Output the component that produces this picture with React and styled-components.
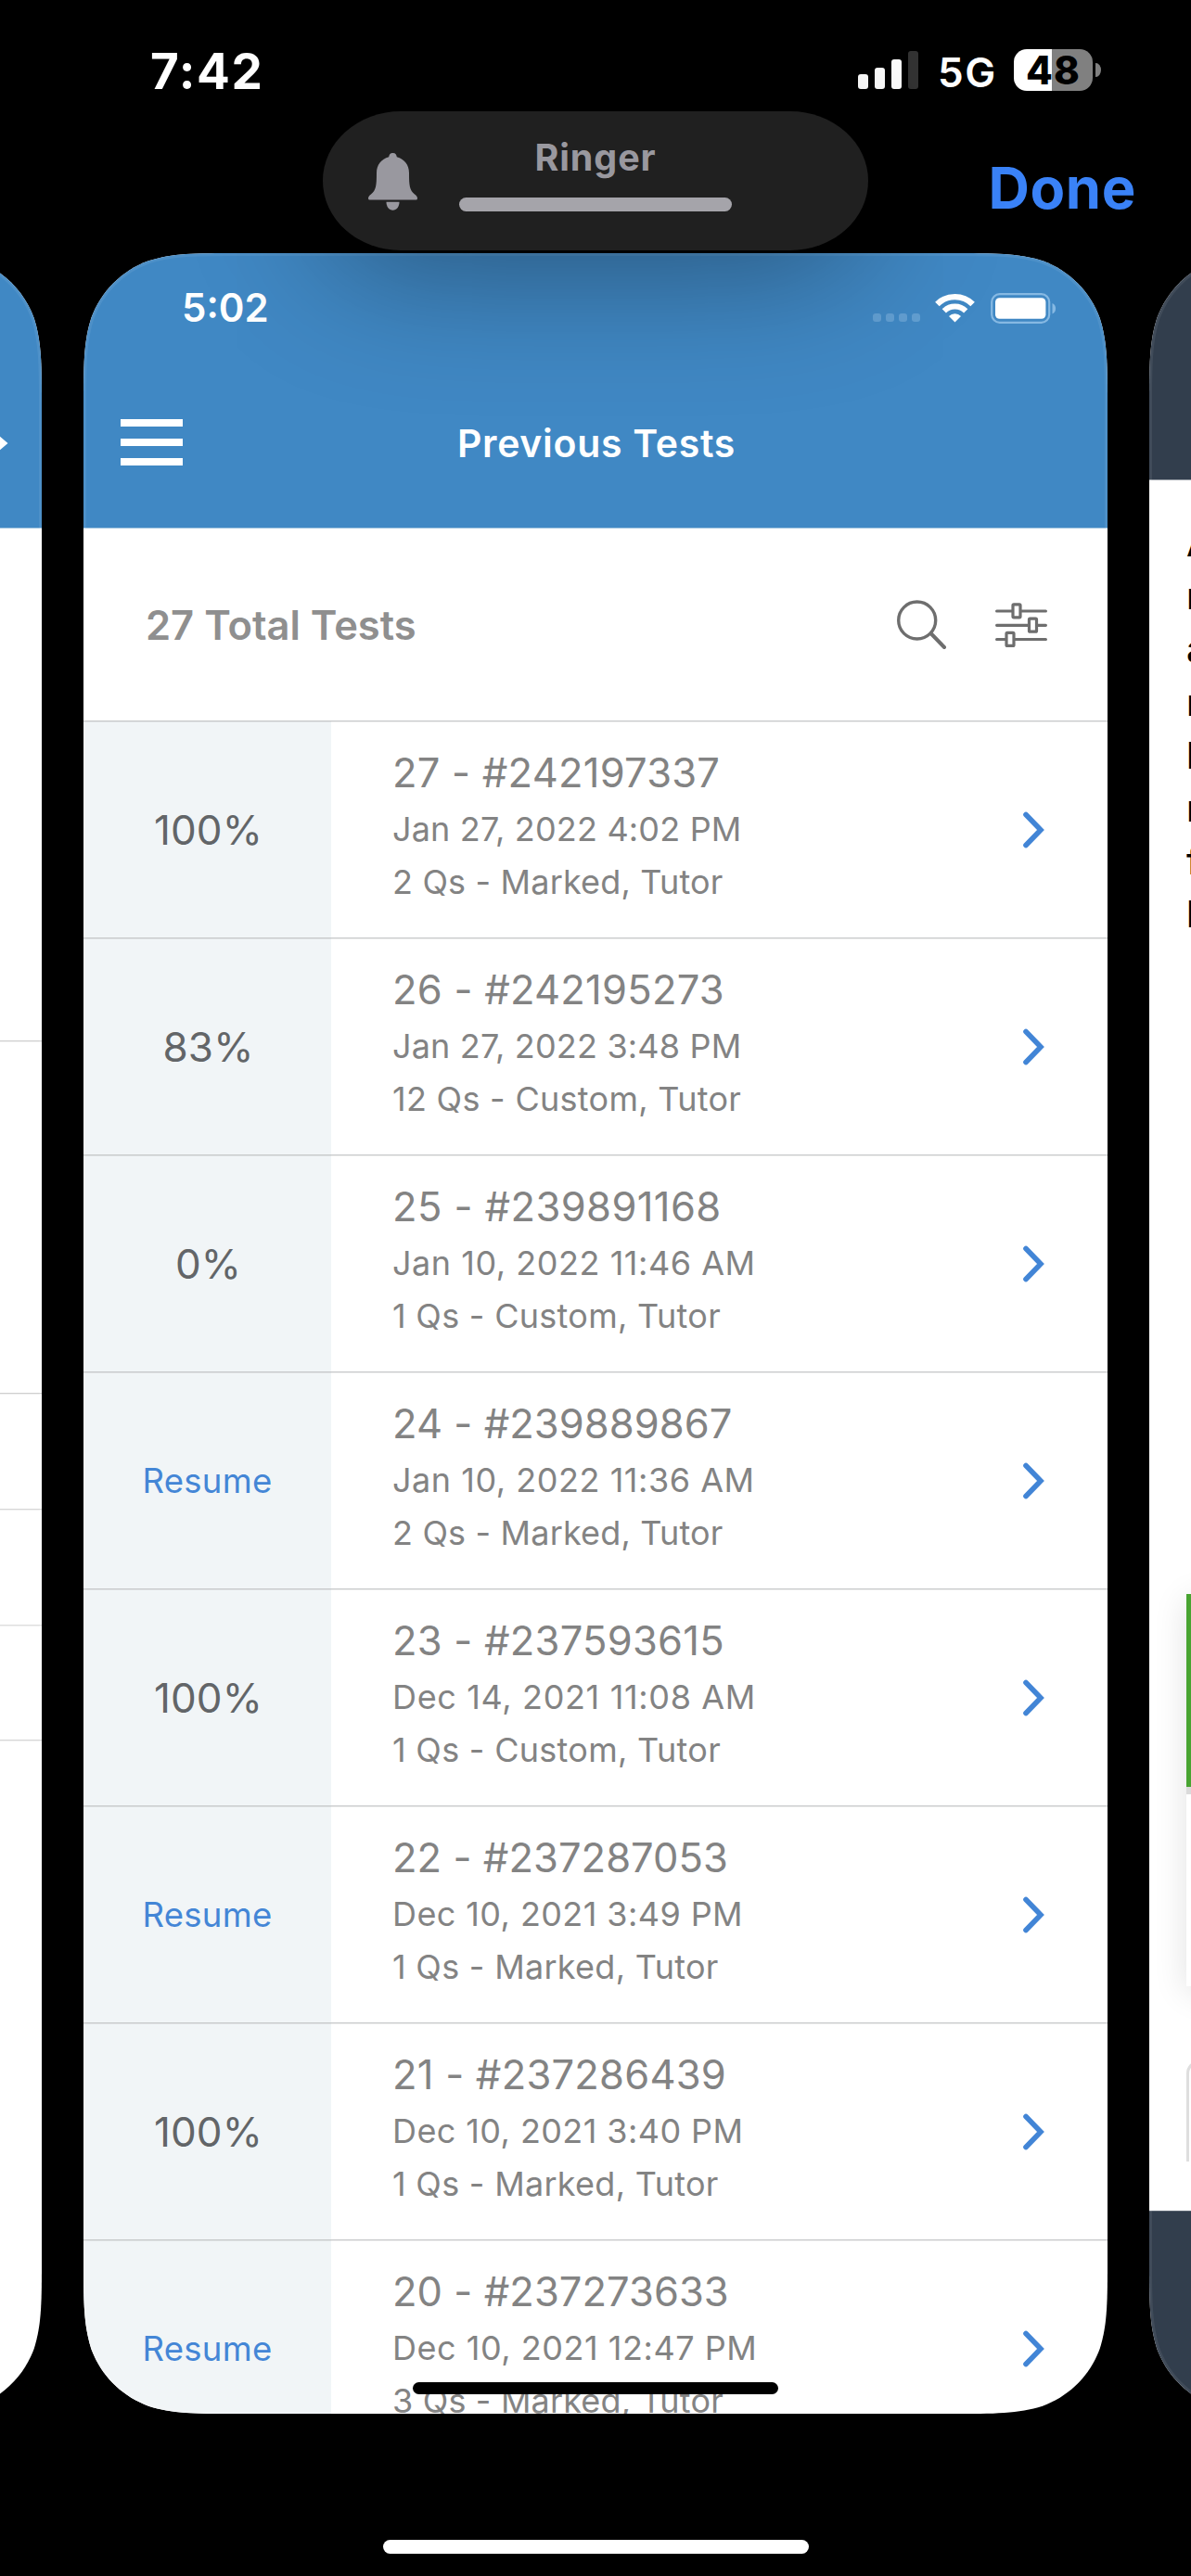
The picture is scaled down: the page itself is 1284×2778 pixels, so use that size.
import React from "react";
import styled, { createGlobalStyle } from "styled-components";

const GlobalStyle = createGlobalStyle`
  *, *::before, *::after { box-sizing: border-box; }
  html, body { margin: 0; padding: 0; background: #000; }
  body { font-family: Inter, "Liberation Sans", sans-serif; overflow: hidden; }
`;

/* Outline of an app card with continuous-curvature corners */
const CARD_W = 1104;
const CARD_H = 2330;
const cardOutline = (() => {
  const w = CARD_W;
  const h = CARD_H;
  const r = 111;
  const a = 1.52866 * r;
  const b = 1.08849 * r;
  const c = 0.86841 * r;
  const d = 0.63149 * r;
  const e = 0.07491 * r;
  const f = 0.37282 * r;
  const g = 0.16906 * r;
  const n = (...v) => v.map((x) => x.toFixed(2)).join(" ");
  return [
    `M${n(a, 0)} L${n(w - a, 0)}`,
    `C${n(w - b, 0, w - c, 0, w - d, e)} C${n(w - f, g, w - g, f, w - e, d)} C${n(w, c, w, b, w, a)}`,
    `L${n(w, h - a)}`,
    `C${n(w, h - b, w, h - c, w - e, h - d)} C${n(w - g, h - f, w - f, h - g, w - d, h - e)} C${n(w - c, h, w - b, h, w - a, h)}`,
    `L${n(a, h)}`,
    `C${n(b, h, c, h, d, h - e)} C${n(f, h - g, g, h - f, e, h - d)} C${n(0, h - c, 0, h - b, 0, h - a)}`,
    `L${n(0, a)}`,
    `C${n(0, b, 0, c, e, d)} C${n(g, f, f, g, d, e)} C${n(c, 0, b, 0, a, 0)} Z`,
  ].join(" ");
})();

const Screen = styled.div`
  position: relative;
  display: flex;
  flex-direction: column;
  align-items: center;
  width: 1284px;
  height: 2778px;
  overflow: hidden;
  background: #000;
`;

/* ---------- system chrome ---------- */

const SystemBar = styled.header`
  display: flex;
  align-items: center;
  justify-content: space-between;
  width: 100%;
  height: 154px;
  padding: 0 97px 0 162px;
  color: #fff;
`;

const SystemClock = styled.span`
  font-size: 53px;
  font-weight: 700;
  line-height: 60px;
  letter-spacing: 1.6px;
`;

const SystemIcons = styled.div`
  display: flex;
  align-items: center;
`;

const Bars = styled.div`
  display: flex;
  align-items: flex-end;
  gap: 7px;
  height: 42px;
  margin: -4px 21px 0 0;
`;

const Bar = styled.i`
  width: 11px;
  height: ${(p) => p.$h}px;
  border-radius: 3px;
  background: ${(p) => (p.$off ? "#333" : "#fff")};
`;

const Network = styled.span`
  width: 82px;
  font-size: 44px;
  font-weight: 600;
  line-height: 48px;
  letter-spacing: 1.5px;
  padding-top: 2px;
`;

const Battery = styled.div`
  display: flex;
  align-items: center;
  gap: 3px;
  margin-top: -3px;
`;

const BatteryBody = styled.div`
  display: flex;
  align-items: center;
  justify-content: center;
  width: 85px;
  height: 45px;
  border-radius: 14px;
  background: linear-gradient(90deg, #fff 41px, #808080 41px);
  color: #000;
  font-size: 42px;
  font-weight: 800;
  line-height: 45px;
  letter-spacing: 1px;
`;

const BatteryNub = styled.i`
  width: 6px;
  height: 15px;
  border-radius: 0 6px 6px 0 / 0 8px 8px 0;
  background: #808080;
`;

const SwitcherBar = styled.div`
  display: flex;
  justify-content: flex-end;
  width: 100%;
  height: 119px;
  padding: 13px 59px 0 0;
`;

const DoneButton = styled.button`
  height: 72px;
  padding: 0;
  border: 0;
  background: none;
  color: #3a82f7;
  font-family: inherit;
  font-size: 61.5px;
  font-weight: 700;
  line-height: 72px;
  letter-spacing: 0.6px;
`;

const RingerHud = styled.div`
  position: absolute;
  z-index: 2;
  top: 120px;
  left: 348px;
  display: flex;
  width: 588px;
  height: 150px;
  padding: 0 147px 0 49px;
  border-radius: 84px / 75px;
  background: #202020;
  box-shadow: 0 14px 150px rgba(0, 0, 0, 0.42);
`;

const RingerBody = styled.div`
  display: flex;
  flex: 1;
  flex-direction: column;
  align-items: center;
  padding-top: 26px;
`;

const RingerLabel = styled.span`
  color: #99989f;
  font-size: 39.5px;
  font-weight: 700;
  line-height: 48px;
  letter-spacing: 0.9px;
`;

const RingerTrack = styled.div`
  width: 294px;
  height: 15px;
  margin-top: 19px;
  border-radius: 8px;
  background: #a5a4aa;
`;

const BellIcon = styled.svg`
  width: 53px;
  height: 62px;
  margin: 45px 45px 0 0;
  fill: #99989f;
`;

const Carousel = styled.main`
  display: flex;
  flex: none;
  justify-content: center;
  gap: 45px;
  width: 1284px;
  height: ${CARD_H}px;
`;

const Card = styled.section`
  position: relative;
  display: flex;
  flex: none;
  flex-direction: column;
  width: ${CARD_W}px;
  height: ${CARD_H}px;
  overflow: hidden;
  background: #fff;
  clip-path: path("${cardOutline}");
`;

const Rim = styled.svg`
  position: absolute;
  inset: 0;
  fill: none;
  stroke: rgba(255, 255, 255, 0.07);
  stroke-width: 6;
  pointer-events: none;
`;

const HomeIndicator = styled.div`
  width: 459px;
  height: 15px;
  margin-top: 136px;
  border-radius: 8px;
  background: #fff;
`;

/* ---------- current card ---------- */

const AppHeader = styled.header`
  flex: none;
  height: 297px;
  border-bottom: 1px solid #a3c6e1;
  background: #4088c4;
  color: #fff;
`;

const StatusRow = styled.div`
  display: flex;
  align-items: center;
  justify-content: space-between;
  height: 118px;
  padding: 0 55px 0 106px;
`;

const CardClock = styled.span`
  font-size: 42px;
  font-weight: 600;
  line-height: 48px;
`;

const StatusIcons = styled.div`
  display: flex;
  align-items: center;
`;

const Dots = styled.div`
  display: flex;
  gap: 5px;
  margin: 20px 16px 0 0;
`;

const Dot = styled.i`
  width: 9px;
  height: 9px;
  border-radius: 3px;
  background: #629fd2;
`;

const NavRow = styled.div`
  display: flex;
  align-items: center;
  height: 174px;
  padding: 0 105px 0 40px;
`;

const Hamburger = styled.div`
  display: flex;
  flex-direction: column;
  gap: 13px;
  width: 67px;
  margin-top: -2px;
`;

const HamburgerLine = styled.i`
  height: 8px;
  background: #fff;
`;

const NavTitle = styled.h1`
  flex: 1;
  margin: 0;
  font-size: 41px;
  font-weight: 600;
  line-height: 50px;
  letter-spacing: 0.7px;
  text-align: center;
`;

const Toolbar = styled.div`
  display: flex;
  flex: none;
  align-items: center;
  height: 207px;
  padding: 0 65px 0 67px;
`;

const Total = styled.h2`
  flex: 1;
  margin: 0;
  color: #8f8f8f;
  font-size: 43.5px;
  font-weight: 600;
  line-height: 52px;
`;

const ToolIcon = styled.svg`
  display: block;
  margin-left: ${(p) => p.$gap || 0}px;
  fill: none;
  stroke: #6e6e6e;
`;

const Row = styled.article`
  display: flex;
  flex: none;
  height: 234px;
  border-top: 1px solid #c6c8c9;
  box-shadow: inset 0 1px rgba(0, 0, 0, 0.07);
`;

const Score = styled.div`
  display: flex;
  align-items: center;
  justify-content: center;
  width: 267px;
  padding: ${(p) => (p.$resume ? "0" : "1px 0 0 2px")};
  background: #f1f5f7;
  box-shadow: inset 0 1px rgba(0, 0, 0, 0.07);
  color: ${(p) => (p.$resume ? "#4486d6" : "#626568")};
  font-size: ${(p) => (p.$resume ? 36.5 : 44)}px;
  letter-spacing: ${(p) => (p.$resume ? 0.3 : 0.1)}px;
`;

const Details = styled.div`
  flex: 1;
  padding: 23px 0 0 66px;
  color: #838383;
`;

const ones = (text) => (text.match(/1/g) || []).length;

const TestName = styled.div`
  font-size: 43.5px;
  line-height: 65px;
  letter-spacing: ${(p) => 0.05 + 0.18 * ones(p.children)}px;
`;

const TestLine = styled.div`
  font-size: 36px;
  line-height: 57px;
  letter-spacing: ${(p) => 0.17 + 0.12 * ones(p.children)}px;
  white-space: pre;
`;

const Chevron = styled.svg`
  align-self: center;
  width: 25px;
  height: 40px;
  margin-right: 67px;
  fill: none;
  stroke: #4285d6;
  stroke-width: 5.6;
  stroke-linecap: round;
  stroke-linejoin: miter;
`;

const CardIndicator = styled.div`
  position: absolute;
  bottom: 21px;
  left: 355px;
  width: 394px;
  height: 13px;
  border-radius: 7px;
  background: #000;
`;

/* ---------- neighbouring cards ---------- */

const PrevHeader = styled(AppHeader)`
  display: flex;
  justify-content: flex-end;
  padding: 189px 36px 0 0;
`;

const PrevBlock = styled.div`
  flex: none;
  height: ${(p) => p.$h}px;
  border-bottom: 1px solid ${(p) => p.$line};
  box-shadow: 0 1px rgba(0, 0, 0, 0.06);
`;

const DarkHeader = styled.header`
  flex: none;
  height: 245px;
  border-bottom: 1px solid #9aa1a8;
  background: #323e4d;
`;

const DarkFooter = styled.footer`
  flex: none;
  height: 219px;
  margin-top: auto;
  border-top: 1px solid #5a6470;
  background: #323e4d;
`;

const Passage = styled.div`
  flex: none;
  height: 1201px;
  padding: 39px 40px;
  color: #000;
  font-size: 40px;
  font-weight: 500;
  line-height: 57.2px;
`;

const AnswerCard = styled.div`
  flex: none;
  height: 423px;
  margin: 0 40px;
  background: #fff;
  box-shadow: 0 6px 34px rgba(0, 0, 0, 0.12);
`;

const AnswerBanner = styled.div`
  height: 216px;
  border-bottom: 8px solid #dadada;
  background: #48a431;
`;

const NoteBox = styled.div`
  flex: none;
  height: 109px;
  margin: 80px 40px 0;
  border: 3px solid #dedede;
  border-bottom: 0;
  border-radius: 14px 14px 0 0;
`;

const tests = [
  ["100%", "27 - #242197337", "Jan 27, 2022 4:02 PM", "2 Qs - Marked, Tutor"],
  ["83%", "26 - #242195273", "Jan 27, 2022 3:48 PM", "12 Qs - Custom, Tutor"],
  ["0%", "25 - #239891168", "Jan 10, 2022 11:46 AM", "1 Qs - Custom, Tutor"],
  ["Resume", "24 - #239889867", "Jan 10, 2022 11:36 AM", "2 Qs - Marked, Tutor"],
  ["100%", "23 - #237593615", "Dec 14, 2021 11:08 AM", "1 Qs - Custom, Tutor"],
  ["Resume", "22 - #237287053", "Dec 10, 2021 3:49 PM", "1 Qs - Marked, Tutor"],
  ["100%", "21 - #237286439", "Dec 10, 2021 3:40 PM", "1 Qs - Marked, Tutor"],
  ["Resume", "20 - #237273633", "Dec 10, 2021 12:47 PM", "3 Qs - Marked, Tutor"],
];

const passageLines = ["A", "r", "a", "r", "l", "r", "f", "l"];

function CardRim() {
  return (
    <Rim width={CARD_W} height={CARD_H} viewBox={`0 0 ${CARD_W} ${CARD_H}`}>
      <path d={cardOutline} />
    </Rim>
  );
}

function WifiIcon() {
  return (
    <svg width="43" height="32" viewBox="0 0 43 32" fill="none" stroke="#fff">
      <path d="M2.4 12 A27 27 0 0 1 40.6 12" strokeWidth="6.4" />
      <path d="M9.8 19.4 A16.5 16.5 0 0 1 33.2 19.4" strokeWidth="6" />
      <path d="M21.5 31.5 L15 25 A9.2 9.2 0 0 1 28 25 Z" fill="#fff" stroke="none" />
    </svg>
  );
}

function CardBattery() {
  return (
    <svg width="71" height="33" viewBox="0 0 71 33">
      <rect x="1.2" y="1.2" width="62" height="30.6" rx="8.5" fill="none" stroke="#86b9e3" strokeWidth="2.2" />
      <rect x="5" y="5.2" width="54.4" height="22.6" rx="4.5" fill="#fff" />
      <path d="M66.5 11 C71.3 13 71.3 20.5 66.5 22.5 Z" fill="#86b9e3" />
    </svg>
  );
}

const WifiSlot = styled.span`
  display: flex;
  margin-right: 17px;
`;

function PreviousCard() {
  return (
    <Card>
      <PrevHeader>
        <svg width="40" height="32" viewBox="0 0 40 32" fill="#fff">
          <path d="M0 12 H21 V0 L39.5 16 L21 32 V20 H0 Z" />
        </svg>
      </PrevHeader>
      <PrevBlock $h={553} $line="#cfcfcf" />
      <PrevBlock $h={380} $line="#cfcfcf" />
      <PrevBlock $h={125} $line="#d6d6d6" />
      <PrevBlock $h={125} $line="#dedede" />
      <PrevBlock $h={124} $line="#d6d6d6" />
      <CardRim />
    </Card>
  );
}

function TestsCard() {
  return (
    <Card>
      <AppHeader>
        <StatusRow>
          <CardClock>5:02</CardClock>
          <StatusIcons>
            <Dots>
              <Dot />
              <Dot />
              <Dot />
              <Dot />
            </Dots>
            <WifiSlot>
              <WifiIcon />
            </WifiSlot>
            <CardBattery />
          </StatusIcons>
        </StatusRow>
        <NavRow>
          <Hamburger>
            <HamburgerLine />
            <HamburgerLine />
            <HamburgerLine />
          </Hamburger>
          <NavTitle>Previous Tests</NavTitle>
        </NavRow>
      </AppHeader>
      <Toolbar>
        <Total>27 Total Tests</Total>
        <ToolIcon width="54" height="54" viewBox="0 0 54 54" strokeWidth="3.4" strokeLinecap="round">
          <circle cx="21.7" cy="22" r="20" />
          <path d="M37 36.500 L51 51" strokeWidth="4" />
        </ToolIcon>
        <ToolIcon $gap={52} width="56" height="48" viewBox="0 0 56 48" strokeWidth="3.2" strokeLinecap="round">
          <path d="M1.6 9 H18 M28 9 H54.4 M1.6 24.3 H35.5 M45.5 24.3 H54.4 M1.6 39.5 H11 M21 39.5 H54.4" />
          <rect x="19" y="1.8" width="8" height="14" rx="1" />
          <rect x="36.5" y="17.2" width="8" height="14" rx="1" />
          <rect x="12" y="32.4" width="8" height="14" rx="1" />
        </ToolIcon>
      </Toolbar>
      {tests.map(([score, name, date, info]) => (
        <Row key={name}>
          <Score $resume={score === "Resume"}>{score}</Score>
          <Details>
            <TestName>{name}</TestName>
            <TestLine>{date}</TestLine>
            <TestLine>{info}</TestLine>
          </Details>
          <Chevron viewBox="0 0 25 40">
            <path d="M4 3.5 L20 20 L4 36.5" />
          </Chevron>
        </Row>
      ))}
      <CardIndicator />
      <CardRim />
    </Card>
  );
}

function NextCard() {
  return (
    <Card>
      <DarkHeader />
      <Passage>
        {passageLines.map((line, i) => (
          <div key={i}>{line}</div>
        ))}
      </Passage>
      <AnswerCard>
        <AnswerBanner />
      </AnswerCard>
      <NoteBox />
      <DarkFooter />
      <CardRim />
    </Card>
  );
}

export default function App() {
  return (
    <Screen>
      <GlobalStyle />
      <SystemBar>
        <SystemClock>7:42</SystemClock>
        <SystemIcons>
          <Bars>
            <Bar $h={16} />
            <Bar $h={23} />
            <Bar $h={32} />
            <Bar $h={41} $off />
          </Bars>
          <Network>5G</Network>
          <Battery>
            <BatteryBody>48</BatteryBody>
            <BatteryNub />
          </Battery>
        </SystemIcons>
      </SystemBar>
      <SwitcherBar>
        <DoneButton>Done</DoneButton>
      </SwitcherBar>
      <RingerHud>
        <BellIcon viewBox="0 0 53 62">
          <path d="M26.5 0 C29.5 0 30.5 2 30.8 4.3 C39 6.5 44 13 44 21.5 C44 35 44.5 40 50 44.6 C52 46.2 53 47.2 53 49 Q53 50.6 51.4 50.6 H1.6 Q0 50.6 0 49 C0 47.2 1 46.2 3 44.6 C8.5 40 9 35 9 21.5 C9 13 14 6.5 22.2 4.3 C22.5 2 23.5 0 26.5 0 Z" />
          <path d="M19.5 52.8 H33.5 C33.5 58 30.5 61.8 26.5 61.8 C22.5 61.8 19.5 58 19.5 52.8 Z" />
        </BellIcon>
        <RingerBody>
          <RingerLabel>Ringer</RingerLabel>
          <RingerTrack />
        </RingerBody>
      </RingerHud>
      <Carousel>
        <PreviousCard />
        <TestsCard />
        <NextCard />
      </Carousel>
      <HomeIndicator />
    </Screen>
  );
}
